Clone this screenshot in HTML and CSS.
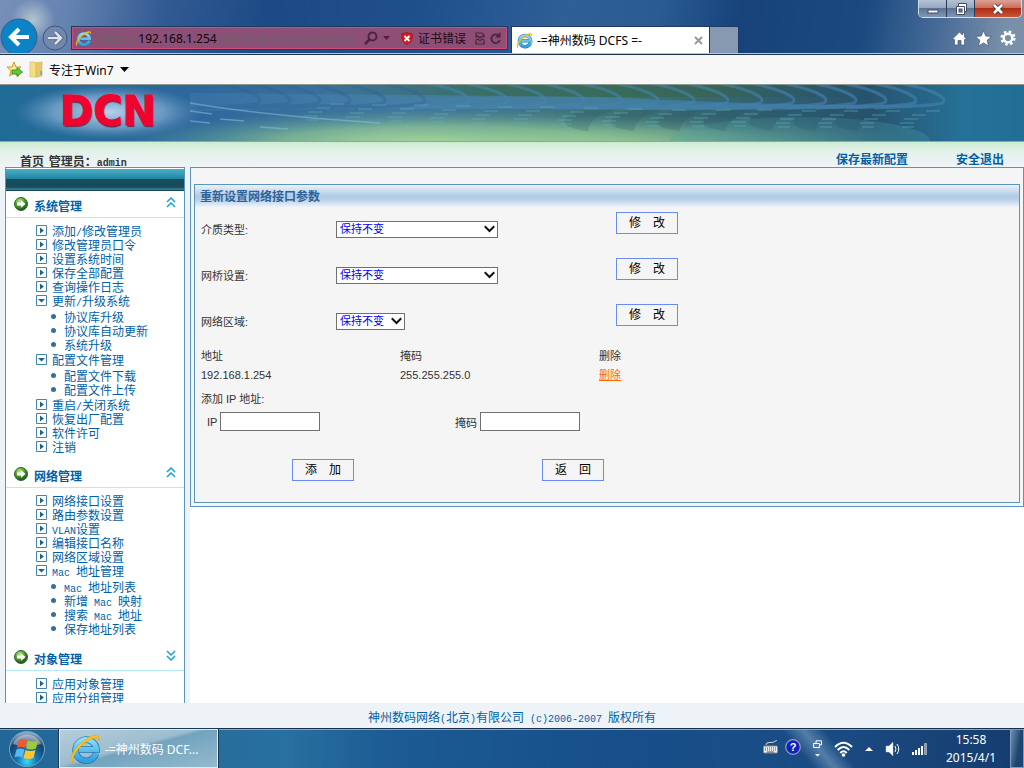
FILE: index.html
```html
<!DOCTYPE html>
<html lang="zh-CN">
<head>
  <meta charset="UTF-8">
  <title>-=神州数码 DCFS =-</title>
  <link rel="stylesheet" href="styles.css">
</head>
<body>

<!-- shared icons -->
<svg class="sprite" aria-hidden="true">
  <defs>
    <linearGradient id="ieBlue" x1="0" y1="0" x2="0" y2="1">
      <stop offset="0" stop-color="#8fdcfa"/><stop offset="1" stop-color="#2f9fe0"/>
    </linearGradient>
    <radialGradient id="greenBall" cx=".4" cy=".3" r=".7">
      <stop offset="0" stop-color="#c4e69a"/><stop offset=".5" stop-color="#54a02c"/><stop offset="1" stop-color="#164c1a"/>
    </radialGradient>
    <symbol id="ie" viewBox="0 0 32 32">
      <path d="M27 20.500A10.500 10.500 0 1 1 27.500 16.500H10" fill="none" stroke="#1c78b4" stroke-width="6.500"/>
      <path d="M27 20.500A10.500 10.500 0 1 1 27.500 16.500H10" fill="none" stroke="url(#ieBlue)" stroke-width="5"/>
      <path d="M4 30C-2 27 6 13 16 7C24 1 31 0 30 8C29 3 23 5 17 9C8 15 2 25 4 30Z" fill="#fcc515" stroke="#e0a010" stroke-width=".6"/>
    </symbol>
    <symbol id="ball" viewBox="0 0 14 14">
      <circle cx="7" cy="7" r="6.500" fill="url(#greenBall)" stroke="#2c6a30"/>
      <path d="M3 5.500h4V3.200L11.500 7 7 10.800V8.500H3z" fill="#fff"/>
    </symbol>
    <symbol id="up" viewBox="0 0 10 11">
      <path d="M1 5l4-4 4 4M1 10l4-4 4 4" fill="none" stroke="#12a5d6" stroke-width="1.500"/>
    </symbol>
    <symbol id="down" viewBox="0 0 10 11">
      <path d="M1 1l4 4 4-4M1 6l4 4 4-4" fill="none" stroke="#12a5d6" stroke-width="1.500"/>
    </symbol>
    <symbol id="closed" viewBox="0 0 11 11">
      <path d="M.5.5h10v10H.5z" fill="#fff" stroke="#4585ad"/>
      <path d="M4 2.500v6l4-3z" fill="#1d6289"/>
    </symbol>
    <symbol id="open" viewBox="0 0 11 11">
      <path d="M.5.5h10v10H.5z" fill="#fff" stroke="#4585ad"/>
      <path d="M2 4h7L5.500 7.500z" fill="#1d6289"/>
    </symbol>
    <symbol id="chev" viewBox="0 0 10 7">
      <path d="M.7 1l4.300 4.300L9.300 1" fill="none" stroke="#111" stroke-width="1.800"/>
    </symbol>
  </defs>
</svg>

<!-- browser frame -->
<header class="frame">
  <div class="win-row">
    <div class="win-btns">
      <button class="win-btn" aria-label="最小化"><svg width="12" height="12" viewBox="0 0 12 12"><rect x="1" y="7" width="10" height="3" fill="#fff" stroke="#444b60"/></svg></button>
      <button class="win-btn" aria-label="还原"><svg width="12" height="12" viewBox="0 0 12 12"><path d="M3.500.5h8v8h-2v3h-8v-8h2z" fill="#fff" stroke="#444b60"/><path d="M3.500 3.500h6v5" fill="none" stroke="#444b60"/><rect x="4" y="6" width="3" height="3" fill="#6f82a0" stroke="#444b60"/></svg></button>
      <button class="win-btn win-close" aria-label="关闭"><svg width="12" height="12" viewBox="0 0 12 12"><path d="M2 2l8 8M10 2l-8 8" stroke="#4a3a44" stroke-width="4.500"/><path d="M2 2l8 8M10 2l-8 8" stroke="#fff" stroke-width="2.500"/></svg></button>
    </div>
  </div>
  <div class="nav-row">
    <button class="nav-back" aria-label="后退"><svg width="38" height="38" viewBox="0 0 38 38"><circle cx="19" cy="19" r="18" fill="#0a84c6" stroke="#41597c" stroke-width="1"/><path d="M29 19H12M19 11l-8 8 8 8" fill="none" stroke="#fff" stroke-width="4"/></svg></button>
    <button class="nav-fwd" aria-label="前进"><svg width="26" height="26" viewBox="0 0 26 26"><circle cx="13" cy="13" r="12" fill="#7089ad" stroke="#3f5679"/><path d="M6 13h12M13 7l6 6-6 6" fill="none" stroke="#46597b" stroke-width="4"/><path d="M6 13h12M13 7l6 6-6 6" fill="none" stroke="#dde4ee" stroke-width="2.500"/></svg></button>
    <div class="address">
      <svg width="17" height="17"><use href="#ie"/></svg>
      <span class="url">https://<b>192.168.1.254</b>:9999/admin/show/syste</span>
      <svg width="14" height="14" viewBox="0 0 14 14"><circle cx="8.500" cy="5.500" r="4" fill="none" stroke="#4b2440" stroke-width="2"/><path d="M5.500 8.500L1 13" stroke="#4b2440" stroke-width="2.500"/></svg>
      <svg width="7" height="4" viewBox="0 0 7 4"><path d="M0 0h7L3.500 4z" fill="#4b2440"/></svg>
      <svg class="shield" width="12" height="13" viewBox="0 0 12 13"><path d="M6 .5C8 1.500 9.500 1.500 11 1.500C12 7 10 11 6 12.500C2 11 0 7 1 1.500C2.500 1.500 4 1.500 6 .5z" fill="#d91c22" stroke="#a81319"/><path d="M3.500 4l5 5M8.500 4l-5 5" stroke="#fff" stroke-width="1.800"/></svg>
      <span class="cert">证书错误</span>
      <svg width="10" height="13" viewBox="0 0 10 13"><path d="M1 5V1h6l2 2v2L7 4 5 6 3 4zM1 8l2-1 2 2 2-2 2 1v4H1z" fill="none" stroke="#4b2440" stroke-width="1.200"/></svg>
      <svg width="11" height="13" viewBox="0 0 11 13"><path d="M9 4A4.300 4.300 0 1 0 9.800 8" fill="none" stroke="#4b2440" stroke-width="1.800"/><path d="M10.500 0v5.500H5z" fill="#4b2440"/></svg>
    </div>
    <div class="tab">
      <svg width="17" height="17"><use href="#ie"/></svg>
      <span class="tab-title">-=神州数码 DCFS =-</span>
      <svg width="9" height="9" viewBox="0 0 9 9"><path d="M1 1l7 7M8 1L1 8" stroke="#999" stroke-width="2"/></svg>
    </div>
    <button class="new-tab" aria-label="新建选项卡"></button>
    <div class="tools">
      <svg width="15" height="15" viewBox="0 0 15 15"><path d="M7.500 1L0 8.500h2.500V14H6V9.500h3V14h3.500V8.500H15L12.500 6V2h-2v2z" fill="#fff" stroke="#44587a" stroke-width=".7"/></svg>
      <svg width="17" height="17" viewBox="0 0 17 17"><path d="M8.500.7l2.300 5.400 5.700.4-4.400 3.800 1.500 5.700-5.100-3.100L3.400 16l1.500-5.700L.5 6.500l5.700-.4z" fill="#fff" stroke="#44587a" stroke-width=".7"/></svg>
      <svg width="16" height="16" viewBox="0 0 16 16"><circle cx="8" cy="8" r="6.300" fill="none" stroke="#fff" stroke-width="2.600" stroke-dasharray="2.500 2.450"/><circle cx="8" cy="8" r="4.300" fill="none" stroke="#fff" stroke-width="2.400"/></svg>
    </div>
  </div>
</header>

<nav class="favorites">
  <svg width="17" height="17" viewBox="0 0 17 17"><path d="M8 1l2 5h5l-4 3.500L12.500 15 8 12l-4.500 3L5 9.500 1 6h5z" fill="#fde98e" stroke="#d09a20"/><path d="M6 9h5V6.500l5.500 4.500-5.500 4.500V13H6z" fill="#5ccb3c" stroke="#258c1c" stroke-width=".8"/></svg>
  <svg width="14" height="17" viewBox="0 0 14 17"><path d="M1 1h5l2 1v14H1z" fill="#f3dc8c" stroke="#d8b95c" stroke-width=".6"/><path d="M7 2l6-1v14l-6 1z" fill="#e8c765" stroke="#cfae52" stroke-width=".6"/><path d="M12 10v4" stroke="#58b0d8" stroke-width="1.500"/></svg>
  <a href="#">专注于Win7</a>
  <svg width="9" height="5" viewBox="0 0 9 5"><path d="M0 0h9L4.500 5z" fill="#000"/></svg>
</nav>

<!-- banner -->
<div class="banner">
  <svg class="banner-bg" viewBox="0 0 1024 56" preserveAspectRatio="none" aria-hidden="true">
    <defs>
      <linearGradient id="sea">
        <stop offset="0" stop-color="#206b96"/><stop offset=".2" stop-color="#2f689c"/><stop offset=".4" stop-color="#42779b"/>
        <stop offset=".6" stop-color="#3f7375"/><stop offset=".85" stop-color="#28536f"/><stop offset=".94" stop-color="#267198"/><stop offset="1" stop-color="#236e96"/>
      </linearGradient>
      <radialGradient id="glow">
        <stop offset="0" stop-color="#b4e29c"/><stop offset=".5" stop-color="#8cc494" stop-opacity=".75"/><stop offset="1" stop-color="#5a9c94" stop-opacity="0"/>
      </radialGradient>
      <radialGradient id="logoGlow">
        <stop offset="0" stop-color="#dcecff" stop-opacity=".8"/><stop offset=".6" stop-color="#a9c8ea" stop-opacity=".5"/><stop offset="1" stop-color="#6fa0d0" stop-opacity="0"/>
      </radialGradient>
      <linearGradient id="topShade">
        <stop offset="0" stop-color="#2f6a50" stop-opacity="0"/><stop offset=".3" stop-color="#356b4e"/><stop offset=".7" stop-color="#38644c"/><stop offset="1" stop-color="#1d4a68" stop-opacity="0"/>
      </linearGradient>
      <linearGradient id="bandFill">
        <stop offset="0" stop-color="#4b86b4" stop-opacity=".3"/><stop offset=".6" stop-color="#4380a8" stop-opacity=".8"/><stop offset="1" stop-color="#35719f" stop-opacity=".7"/>
      </linearGradient>
      <path id="wave" d="M-52 -3C-22 1 8 12 -2 18C-12 21 -40 22 -70 23" fill="none" stroke-width="3"/>
      <path id="tail" d="M-4 22C-40 26 -50 34 -52 46C-70 44 -90 38 -60 26z"/>
      <path id="dash" d="M0 0h14M-14 4h14M-22 8h14M-26 12h14M-24 16h12" fill="none"/>
    </defs>
    <rect width="1024" height="56" fill="url(#sea)"/>
    <rect x="330" width="560" height="12" fill="url(#topShade)" opacity=".7"/>
    <ellipse cx="440" cy="58" rx="320" ry="34" fill="url(#glow)"/>
    <ellipse cx="640" cy="60" rx="280" ry="30" fill="url(#glow)" opacity=".6"/>
    <ellipse cx="800" cy="56" rx="130" ry="24" fill="#4ba0a4" opacity=".3"/>
    <g fill="#23505c" opacity=".2">
      <use href="#tail" x="640"/><use href="#tail" x="686"/><use href="#tail" x="732"/><use href="#tail" x="778"/><use href="#tail" x="824"/><use href="#tail" x="868"/><use href="#tail" x="910"/>
    </g>
    <path d="M190 8Q420 10 600 12Q800 22 940 20Q820 26 640 25Q400 22 190 26z" fill="url(#bandFill)"/>
    <g stroke="#4583ae" opacity=".6">
      <use href="#wave" x="470"/><use href="#wave" x="508"/><use href="#wave" x="546"/><use href="#wave" x="584"/><use href="#wave" x="622"/>
      <use href="#wave" x="658"/><use href="#wave" x="694"/><use href="#wave" x="728"/><use href="#wave" x="762"/><use href="#wave" x="794"/>
      <use href="#wave" x="826"/><use href="#wave" x="856"/><use href="#wave" x="886"/><use href="#wave" x="916"/><use href="#wave" x="944"/>
    </g>
    <g stroke="#2c6394" opacity=".4">
      <use href="#wave" x="260"/><use href="#wave" x="290"/><use href="#wave" x="320"/><use href="#wave" x="350"/><use href="#wave" x="385"/><use href="#wave" x="425"/>
    </g>
    <path d="M190 18Q260 30 380 38M190 26l22 3M220 34l24 2M190 36l20 2M260 42l28 2" fill="none" stroke="#8dc4e4" stroke-width="1.500" opacity=".5"/>
    <g stroke="#62aebb" stroke-width="1.200" opacity=".6">
      <use href="#dash" x="330" y="19"/><use href="#dash" x="372" y="20"/><use href="#dash" x="414" y="20"/><use href="#dash" x="456" y="21"/><use href="#dash" x="498" y="22"/>
      <use href="#dash" x="540" y="22"/><use href="#dash" x="584" y="23"/><use href="#dash" x="628" y="24"/><use href="#dash" x="672" y="25"/><use href="#dash" x="716" y="25"/>
      <use href="#dash" x="758" y="25"/><use href="#dash" x="802" y="26"/><use href="#dash" x="844" y="26"/><use href="#dash" x="886" y="26"/><use href="#dash" x="926" y="26"/>
    </g>
    <ellipse cx="108" cy="27" rx="94" ry="27" fill="url(#logoGlow)"/>
  </svg>
  <div class="logo">DCN</div>
</div>

<div class="userbar">
  <div class="who"><a href="#">首页</a> <span>管理员：<span class="en">admin</span></span></div>
  <a class="act" href="#">保存最新配置</a>
  <a class="act" href="#">安全退出</a>
</div>

<div class="main">
  <!-- left menu -->
  <aside class="side">
    <div class="side-top"></div>
    <h2 class="group"><svg width="14" height="14"><use href="#ball"/></svg><span>系统管理</span><svg class="fold" width="10" height="11"><use href="#up"/></svg></h2>
    <ul class="menu">
      <li><svg><use href="#closed"/></svg><a href="#">添加<span class="en">/</span>修改管理员</a></li>
      <li><svg><use href="#closed"/></svg><a href="#">修改管理员口令</a></li>
      <li><svg><use href="#closed"/></svg><a href="#">设置系统时间</a></li>
      <li><svg><use href="#closed"/></svg><a href="#">保存全部配置</a></li>
      <li><svg><use href="#closed"/></svg><a href="#">查询操作日志</a></li>
      <li><svg><use href="#open"/></svg><a href="#">更新<span class="en">/</span>升级系统</a>
        <ul class="sub">
          <li><a href="#">协议库升级</a></li>
          <li><a href="#">协议库自动更新</a></li>
          <li><a href="#">系统升级</a></li>
        </ul>
      </li>
      <li><svg><use href="#open"/></svg><a href="#">配置文件管理</a>
        <ul class="sub">
          <li><a href="#">配置文件下载</a></li>
          <li><a href="#">配置文件上传</a></li>
        </ul>
      </li>
      <li><svg><use href="#closed"/></svg><a href="#">重启<span class="en">/</span>关闭系统</a></li>
      <li><svg><use href="#closed"/></svg><a href="#">恢复出厂配置</a></li>
      <li><svg><use href="#closed"/></svg><a href="#">软件许可</a></li>
      <li><svg><use href="#closed"/></svg><a href="#">注销</a></li>
    </ul>
    <h2 class="group"><svg width="14" height="14"><use href="#ball"/></svg><span>网络管理</span><svg class="fold" width="10" height="11"><use href="#up"/></svg></h2>
    <ul class="menu">
      <li><svg><use href="#closed"/></svg><a href="#">网络接口设置</a></li>
      <li><svg><use href="#closed"/></svg><a href="#">路由参数设置</a></li>
      <li><svg><use href="#closed"/></svg><a href="#"><span class="en">VLAN</span>设置</a></li>
      <li><svg><use href="#closed"/></svg><a href="#">编辑接口名称</a></li>
      <li><svg><use href="#closed"/></svg><a href="#">网络区域设置</a></li>
      <li><svg><use href="#open"/></svg><a href="#"><span class="en">Mac </span>地址管理</a>
        <ul class="sub">
          <li><a href="#"><span class="en">Mac </span>地址列表</a></li>
          <li><a href="#">新增<span class="en"> Mac </span>映射</a></li>
          <li><a href="#">搜索<span class="en"> Mac </span>地址</a></li>
          <li><a href="#">保存地址列表</a></li>
        </ul>
      </li>
    </ul>
    <h2 class="group"><svg width="14" height="14"><use href="#ball"/></svg><span>对象管理</span><svg class="fold" width="10" height="11"><use href="#down"/></svg></h2>
    <ul class="menu">
      <li><svg><use href="#closed"/></svg><a href="#">应用对象管理</a></li>
      <li><svg><use href="#closed"/></svg><a href="#">应用分组管理</a></li>
    </ul>
  </aside>

  <!-- network interface form -->
  <main class="content">
    <div class="outer">
      <form class="panel">
        <h1>重新设置网络接口参数</h1>
        <div class="row">
          <label for="media">介质类型:</label>
          <div><span class="select"><select id="media"><option>保持不变</option></select><svg><use href="#chev"/></svg></span></div>
          <button type="button" class="btn">修　改</button>
        </div>
        <div class="row">
          <label for="bridge">网桥设置:</label>
          <div><span class="select"><select id="bridge"><option>保持不变</option></select><svg><use href="#chev"/></svg></span></div>
          <button type="button" class="btn">修　改</button>
        </div>
        <div class="row">
          <label for="zone">网络区域:</label>
          <div><span class="select short"><select id="zone"><option>保持不变</option></select><svg><use href="#chev"/></svg></span></div>
          <button type="button" class="btn">修　改</button>
        </div>
        <table class="addr">
          <tr><th>地址</th><th>掩码</th><th>删除</th></tr>
          <tr><td>192.168.1.254</td><td>255.255.255.0</td><td><a href="#">删除</a></td></tr>
        </table>
        <p class="add-title">添加 IP 地址:</p>
        <div class="add-row">
          <div class="field"><label for="ip">IP</label><input type="text" id="ip"></div>
          <div class="field"><label for="mask">掩码</label><input type="text" id="mask"></div>
        </div>
        <div class="btn-row">
          <button type="button" class="btn">添　加</button>
          <button type="button" class="btn">返　回</button>
        </div>
      </form>
    </div>
  </main>
</div>

<footer class="footer">神州数码网络<span class="en">(</span>北京<span class="en">)</span>有限公司<span class="en"> (c)2006-2007 </span>版权所有</footer>

<!-- taskbar -->
<div class="taskbar">
  <button class="start" aria-label="开始"><svg width="38" height="38" viewBox="0 0 38 38">
    <defs><radialGradient id="orb" cx=".5" cy=".85" r=".8"><stop offset="0" stop-color="#35e0ff"/><stop offset=".35" stop-color="#1577b4"/><stop offset=".75" stop-color="#17406e"/><stop offset="1" stop-color="#8fa6bd"/></radialGradient></defs>
    <circle cx="19" cy="19" r="17.500" fill="url(#orb)" stroke="#6fa6c6"/>
    <path d="M5 14A15 15 0 0 1 33 14Q19 19 5 14z" fill="#fff" opacity=".4"/>
    <path d="M11 10q4-2 8 0l-2 8q-4-2-8 0z" fill="#f0592a"/><path d="M20 10.500q5 2 10 0l-2 8q-5 2-10 0z" fill="#9ccb3c"/>
    <path d="M8.500 19.500q4-2 8 0l-2 8q-4-2-8 0z" fill="#5cb6f0"/><path d="M17.500 20q5 2 10 0l-2 8q-5 2-10 0z" fill="#fcc62e"/>
  </svg></button>
  <button class="task"><svg width="32" height="32"><use href="#ie"/></svg><span>-=神州数码 DCF...</span></button>
  <div class="tray">
    <div class="lang">
      <svg width="15" height="14" viewBox="0 0 15 14"><path d="M3 5q0-3 4-2.500T14 0" fill="none" stroke="#d8d8d8"/><rect x=".5" y="6" width="14" height="7" rx="1" fill="#eee" stroke="#8a8a8a"/><path d="M2 8h11M2 10h11" stroke="#555" stroke-dasharray="1 1"/><path d="M4 12h7" stroke="#555"/></svg>
      <svg width="16" height="16" viewBox="0 0 16 16"><circle cx="8" cy="8" r="7.300" fill="#1220c0" stroke="#9aa2b8" stroke-width="1.200"/><text x="8" y="12" text-anchor="middle" class="help">?</text></svg>
    </div>
    <svg width="9" height="18" viewBox="0 0 9 18"><path d="M3 4V.8h5.500v4H6.500M.5 3.500h6v4h-6z" fill="none" stroke="#fff"/><path d="M2 14h5L4.500 16.500z" fill="#fff"/></svg>
    <svg width="19" height="16" viewBox="0 0 19 16"><g fill="none" stroke="#fff" stroke-width="2"><path d="M1 6Q9.500-2.500 18 6M3.700 9Q9.500 3 15.300 9M6.300 12Q9.500 8.500 12.700 12"/></g><circle cx="9.500" cy="14" r="1.800" fill="#fff"/></svg>
    <svg width="8" height="4" viewBox="0 0 8 4"><path d="M0 4h8L4 0z" fill="#fff"/></svg>
    <svg width="15" height="14" viewBox="0 0 15 14"><path d="M1 4h3l4-4v14l-4-4H1z" fill="#fff" stroke="#b0b8c4" stroke-width=".5"/><path d="M10 4q2 3 0 6M12 2q3.500 5 0 10" fill="none" stroke="#fff"/></svg>
    <svg width="15" height="12" viewBox="0 0 15 12"><path d="M0 9h2v3H0zM3 7h2v5H3zM6 5h2v7H6zM9 3h2v9H9z" fill="#fff"/><path d="M12.500.5h2v11h-2z" fill="#8593ab" stroke="#c3cbd9" stroke-width=".6"/></svg>
    <div class="clock"><span>15:58</span><span>2015/4/1</span></div>
    <button class="show-desktop" aria-label="显示桌面"></button>
  </div>
</div>

</body>
</html>
```
FILE: styles.css
```css
* { box-sizing: border-box; }
body {
  margin: 0;
  height: 100vh;
  display: flex;
  flex-direction: column;
  overflow: hidden;
  background: #eef3f8;
  font-family: "Liberation Sans", "Noto Sans CJK SC", sans-serif;
  font-size: 12px;
  color: #333;
}
a { color: #005fa9; text-decoration: none; }
button { margin: 0; padding: 0; border: none; background: none; font: inherit; cursor: pointer; }
svg { display: block; flex: none; }
.sprite { position: absolute; width: 0; height: 0; }
.en { font-family: "Liberation Mono", monospace; font-size: 10px; line-height: 0; white-space: pre; }

/* browser frame */
.frame {
  flex: none;
  border-bottom: 1px solid #1d3553;
  box-shadow: inset 0 -1px #b3c6e2;
  padding-bottom: 1px;
  background:
    radial-gradient(circle at 33px 20px, rgba(225, 235, 225, .6), transparent 22px),
    linear-gradient(100deg, #7790ba 0, #6482b0 7%, #325a93 16%, #1d4a85 26%, #1f4f8a 40%, #2e5f97 55%, #2a5b93 64%, #17427a 72%, #1a4a80 84%, #456a96 91%, #7a90a8 98%);
  font-family: "Noto Sans", "Noto Sans CJK SC", sans-serif;
}
.win-row { display: flex; justify-content: flex-end; height: 18px; padding-right: 2px; }
.win-btns {
  display: flex;
  width: 104px;
  border: 1px solid #d3dbe8;
  border-top: none;
  border-radius: 0 0 5px 5px;
  overflow: hidden;
}
.win-btn {
  width: 28px;
  display: flex;
  justify-content: center;
  align-items: center;
  border-right: 1px solid #2c3b55;
  background: linear-gradient(#b5c2d4 0, #93a5bf 50%, #5c7496 50%, #8296b4 100%);
}
.win-close { flex: 1; border: none; background: linear-gradient(#dba295 0, #cb6a55 50%, #b02c13 50%, #c9553a 100%); }
.nav-row { display: flex; align-items: flex-end; height: 35px; overflow: hidden; }
.nav-back { align-self: flex-start; }
.nav-fwd { align-self: flex-start; margin: 7px 3px 0 4px; }
.address {
  flex: 0 1 437px;
  min-width: 0;
  height: 24px;
  margin-bottom: 3px;
  padding: 0 6px 0 3px;
  display: flex;
  align-items: center;
  gap: 5px;
  border: 1px solid #213a63;
  box-shadow: inset 0 0 0 1px #cf4c74;
  background: #8e4f77;
  color: #1c0b18;
}
.url { flex: 1; overflow: hidden; white-space: nowrap; color: #6f626c; }
.url b { font-weight: normal; color: #0a0508; }
.shield { margin-left: 6px; }
.cert { margin-right: 4px; }
.tab {
  flex: 0 1 199px;
  height: 27px;
  margin-left: 3px;
  padding: 0 6px 0 4px;
  display: flex;
  align-items: center;
  gap: 4px;
  border: 1px solid #213a63;
  border-bottom: none;
  background: #fff;
  color: #000;
}
.tab-title { flex: 1; white-space: nowrap; }
.new-tab { width: 29px; height: 27px; border: 1px solid #213a63; border-width: 1px 1px 0 0; background: #8799b0; }
.tools { flex: 1; display: flex; justify-content: flex-end; align-items: center; gap: 8px; height: 30px; padding-right: 8px; }
.favorites {
  flex: none;
  height: 30px;
  display: flex;
  align-items: center;
  gap: 6px;
  padding: 0 6px;
  background: #f7f7f7;
  border-bottom: 1px solid #8f958f;
  font-family: "Noto Sans", "Noto Sans CJK SC", sans-serif;
}
.favorites a { color: #000; }

/* banner */
.banner { flex: none; position: relative; height: 57px; border-bottom: 1px solid #7ba7cf; box-shadow: inset 0 -1px #b9d3d6; overflow: hidden; }
.banner-bg { position: absolute; inset: 0; width: 100%; height: 56px; }
.logo {
  position: relative;
  width: 216px;
  line-height: 53px;
  text-align: center;
  font-family: "DejaVu Sans", sans-serif;
  font-size: 40px;
  font-weight: bold;
  color: #f0032f;
  -webkit-text-stroke: 1px #f0032f;
  text-shadow: 1px 2px 1px #7d2443;
}
.userbar {
  flex: none;
  height: 25px;
  display: flex;
  align-items: flex-end;
  gap: 48px;
  padding: 0 20px;
  background: linear-gradient(#cdebd3, #e3f1ea 40%, #eff4f8);
  font-weight: bold;
  line-height: 13px;
}
.who { flex: 1; font-family: "Noto Sans CJK SC", sans-serif; }
.who a { color: #333; margin-right: 2px; }
.act { color: #005fa9; }

/* layout */
.main { flex: 1; min-height: 0; display: flex; gap: 5px; padding-left: 5px; overflow: hidden; }
.side {
  flex: none;
  width: 180px;
  overflow: hidden;
  background: #fff;
  border: 1px solid #5b95bf;
  border-bottom: none;
}
.side-top {
  height: 23px;
  border-top: 1px solid #fff;
  border-bottom: 1px solid #144553;
  background: linear-gradient(#49afc7 0, #2487a2 45%, #174f61 50%, #17495a 85%, #3a8ba0 100%);
}
.group {
  display: flex;
  align-items: center;
  gap: 6px;
  height: 27px;
  margin: 0;
  padding: 0 8px;
  border-bottom: 1px solid #b5ebf7;
  font-size: 12px;
  line-height: 16px;
  color: #005fa9;
}
.group span { flex: 1; padding-top: 6px; }
.fold { margin-bottom: 4px; }
.menu { margin: 0; padding: 7px 0 6px 30px; list-style: none; line-height: 14px; white-space: nowrap; }
.menu > li { display: grid; grid-template-columns: 11px 1fr; column-gap: 5px; }
.menu svg { width: 11px; height: 11px; }
.sub { grid-column: 1 / -1; margin: 2px 0 1px; padding: 0 0 0 28px; list-style: none; }
.sub li { position: relative; }
.sub li::before {
  content: "";
  position: absolute;
  left: -13px;
  top: 3px;
  width: 5px;
  height: 5px;
  border-radius: 50%;
  background: #33709b;
}

/* form */
.content { flex: 1; min-width: 0; background: #fff; }
.outer { padding: 16px 3px 3px; border: 1px solid #5b95bf; background: #f5f5f5; }
.panel { padding-bottom: 21px; border: 1px solid #5b95bf; font-size: 11px; }
.panel h1 {
  margin: 0;
  padding: 2px 0 0 5px;
  background: linear-gradient(#edf2f9, #b0cbe4 50%, #b7cfe6 65%, #edf3f9);
  font-size: 12px;
  line-height: 20px;
  color: #2d6399;
}
.row { display: grid; grid-template-columns: 135px 280px auto; justify-content: start; align-items: center; height: 46px; padding: 0 0 2px 6px; }
.select { display: inline-grid; width: 162px; vertical-align: middle; }
.select.short { width: 69px; }
.select select, .select svg { grid-area: 1 / 1; }
.select select {
  appearance: none;
  width: 100%;
  height: 17px;
  padding: 0 3px;
  border: 1px solid #707070;
  border-radius: 0;
  background: #fff;
  font: inherit;
  line-height: 14px;
  color: #00f;
}
.select svg { width: 11px; height: 8px; margin-right: 3px; place-self: center end; pointer-events: none; }
.btn { width: 62px; height: 22px; border: 1px solid #6a8cee; background: #f5f5f5; font-size: 12px; line-height: 18px; color: #000; }
.row .btn { align-self: start; margin-top: 5px; }
.addr { margin: 2px 0 0 6px; border-collapse: collapse; table-layout: fixed; width: 597px; line-height: 19px; }
.addr th, .addr td { padding: 0; text-align: left; font-weight: normal; }
.addr td a { color: #f60; text-decoration: underline; }
.add-title { margin: 5px 0 0 6px; line-height: 19px; }
.add-row { display: grid; grid-template-columns: 248px auto; justify-content: start; padding: 3px 0 0 12px; }
.field { display: flex; align-items: center; gap: 3px; }
.field input { width: 100px; height: 19px; border: 1px solid #707070; background: #fff; font: inherit; }
.btn-row { display: flex; gap: 188px; padding: 28px 0 0 97px; }

.footer { flex: none; height: 25px; padding-top: 5px; text-align: center; line-height: 20px; color: #005fa9; }

/* taskbar */
.taskbar {
  flex: none;
  height: 40px;
  display: flex;
  border-top: 1px solid #1a2f4a;
  box-shadow: inset 0 1px #86a8c8;
  background:
    linear-gradient(50deg, transparent 77%, rgba(170, 200, 220, .4) 79%, transparent 81%),
    linear-gradient(90deg, #236797 0, #28709f 28%, #1c5b94 38%, #174f8a 60%, #1a4c84 80%, #163c6d 100%);
  font-family: "Noto Sans", "Noto Sans CJK SC", sans-serif;
  color: #fff;
}
.start { width: 59px; padding-left: 8px; }
.task {
  width: 159px;
  display: flex;
  align-items: center;
  gap: 4px;
  padding-left: 9px;
  border: 1px solid #e1eaf0;
  outline: 1px solid #1b3a55;
  background: linear-gradient(165deg, #b6cddb 0, #9cbdd0 45%, #73a3bf 50%, #94bacd 100%);
  color: #fff;
  white-space: nowrap;
}
.tray { flex: 1; display: flex; justify-content: flex-end; align-items: center; gap: 12px; }
.lang { display: flex; align-items: center; gap: 7px; margin-bottom: 4px; }
.help { font: bold 11px "Liberation Sans", sans-serif; fill: #fff; }
.clock { display: flex; flex-direction: column; align-items: center; width: 64px; line-height: 18px; }
.show-desktop { align-self: stretch; width: 14px; margin-left: -5px; border: 1px solid #7e9cba; background: linear-gradient(100deg, #6f8fae, #1d4570 60%); }
```
